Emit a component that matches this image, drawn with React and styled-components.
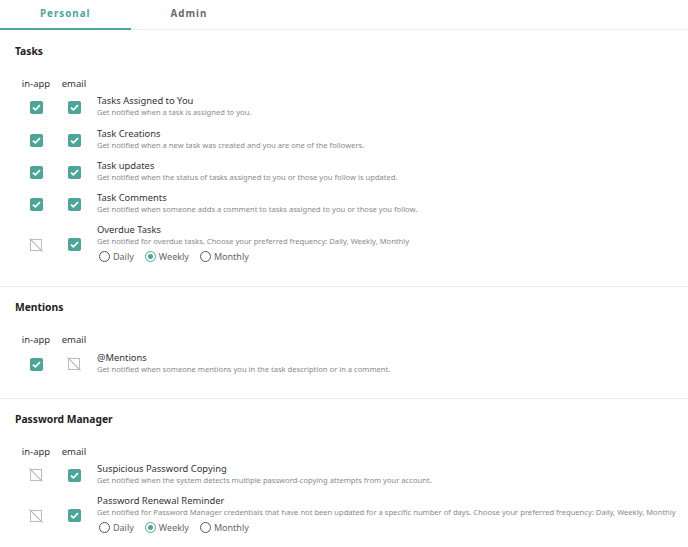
import React, { useState } from "react";
import styled, { createGlobalStyle } from "styled-components";

const GlobalStyle = createGlobalStyle`
  body {
    margin: 0;
    background: #fff;
    font-family: "Noto Sans", "Open Sans", sans-serif;
    color: #333;
  }
`;

const TEAL = "#4ba69a";

const Tabs = styled.div`
  display: flex;
  border-bottom: 1px solid #ececec;
  height: 29px;
  margin-bottom: 1px;
`;

const Tab = styled.button`
  padding: 0 40px 2px;
  border: none;
  background: none;
  margin-bottom: -1px;
  font-family: inherit;
  font-size: 9.8px;
  font-weight: 700;
  letter-spacing: 1px;
  color: ${(p) => (p.$active ? TEAL : "#6b6b6b")};
  border-bottom: 2px solid ${(p) => (p.$active ? TEAL : "transparent")};
  cursor: pointer;
`;

const Section = styled.section`
  padding: 13px 0 23px;
  border-bottom: ${(p) => (p.$last ? "none" : "1px solid #ececec")};
`;

const Heading = styled.h2`
  margin: 0 0 20px 15px;
  font-size: 10.3px;
  line-height: 14px;
  font-weight: 700;
  color: #222;
`;

const Grid = styled.div`
  display: grid;
  grid-template-columns: 38px 38px 1fr;
  padding-left: 17px;
  row-gap: 8.25px;
  align-items: center;
`;

const ColLabel = styled.div`
  font-size: 9.5px;
  line-height: 12px;
  text-align: center;
  color: #333;
  margin-bottom: -4px;
`;

const Cell = styled.div`
  display: flex;
  justify-content: center;
  padding-top: 3px;
`;

const Info = styled.div`
  padding-left: 4px;
`;

const Title = styled.div`
  font-size: 9.4px;
  line-height: 13px;
  color: #333;
`;

const Desc = styled.div`
  font-size: 7.6px;
  line-height: 11px;
  color: #8a8a8a;
  white-space: nowrap;
`;

const Radios = styled.div`
  display: flex;
  gap: 11px;
  margin-top: 3px;
  height: 13px;
  align-items: center;
  padding-left: 2px;
`;

const RadioLabel = styled.label`
  display: flex;
  align-items: center;
  gap: 3px;
  font-size: 9px;
  color: #666;
  cursor: pointer;
`;

const Circle = styled.span`
  width: 9px;
  height: 9px;
  border-radius: 50%;
  border: 1px solid ${(p) => (p.$on ? TEAL : "#555")};
  display: flex;
  align-items: center;
  justify-content: center;
  &::after {
    content: "";
    width: 5px;
    height: 5px;
    border-radius: 50%;
    background: ${(p) => (p.$on ? TEAL : "transparent")};
  }
`;

const Box = styled.span`
  width: 13px;
  height: 13px;
  border-radius: 2px;
  background: ${TEAL};
  display: flex;
  align-items: center;
  justify-content: center;
`;

const Check = ({ on }) =>
  on ? (
    <Box>
      <svg width="9" height="7" viewBox="0 0 9 7">
        <path d="M1 3.6 L3.4 5.8 L8 1.2" fill="none" stroke="#fff" strokeWidth="1.7" />
      </svg>
    </Box>
  ) : (
    <svg width="14" height="14" viewBox="0 0 14 14">
      <rect x="1.5" y="1.5" width="11" height="11" fill="none" stroke="#bdbdbd" strokeWidth="1.1" />
      <path d="M0.5 0.5 L13.5 13.5" stroke="#bdbdbd" strokeWidth="1.1" />
    </svg>
  );

const Frequency = () => {
  const [value, setValue] = useState("Weekly");
  return (
    <Radios>
      {["Daily", "Weekly", "Monthly"].map((f) => (
        <RadioLabel key={f} onClick={() => setValue(f)}>
          <Circle $on={value === f} />
          {f}
        </RadioLabel>
      ))}
    </Radios>
  );
};

const sections = [
  {
    name: "Tasks",
    rows: [
      { title: "Tasks Assigned to You", desc: "Get notified when a task is assigned to you.", app: true, email: true },
      { title: "Task Creations", desc: "Get notified when a new task was created and you are one of the followers.", app: true, email: true },
      { title: "Task updates", desc: "Get notified when the status of tasks assigned to you or those you follow is updated.", app: true, email: true },
      { title: "Task Comments", desc: "Get notified when someone adds a comment to tasks assigned to you or those you follow.", app: true, email: true },
      { title: "Overdue Tasks", desc: "Get notified for overdue tasks. Choose your preferred frequency: Daily, Weekly, Monthly", app: false, email: true, freq: true },
    ],
  },
  {
    name: "Mentions",
    rows: [
      { title: "@Mentions", desc: "Get notified when someone mentions you in the task description or in a comment.", app: true, email: false },
    ],
  },
  {
    name: "Password Manager",
    rows: [
      { title: "Suspicious Password Copying", desc: "Get notified when the system detects multiple password-copying attempts from your account.", app: false, email: true },
      { title: "Password Renewal Reminder", desc: "Get notified for Password Manager credentials that have not been updated for a specific number of days. Choose your preferred frequency: Daily, Weekly, Monthly", app: false, email: true, freq: true },
    ],
  },
];

export default function App() {
  const [tab, setTab] = useState("Personal");
  return (
    <>
      <GlobalStyle />
      <Tabs>
        {["Personal", "Admin"].map((t) => (
          <Tab key={t} $active={tab === t} onClick={() => setTab(t)}>
            {t}
          </Tab>
        ))}
      </Tabs>
      {sections.map((s, i) => (
        <Section key={s.name} $last={i === sections.length - 1}>
          <Heading>{s.name}</Heading>
          <Grid>
            <ColLabel>in-app</ColLabel>
            <ColLabel>email</ColLabel>
            <div />
            {s.rows.map((r) => (
              <React.Fragment key={r.title}>
                <Cell><Check on={r.app} /></Cell>
                <Cell><Check on={r.email} /></Cell>
                <Info>
                  <Title>{r.title}</Title>
                  <Desc>{r.desc}</Desc>
                  {r.freq && <Frequency />}
                </Info>
              </React.Fragment>
            ))}
          </Grid>
        </Section>
      ))}
    </>
  );
}
